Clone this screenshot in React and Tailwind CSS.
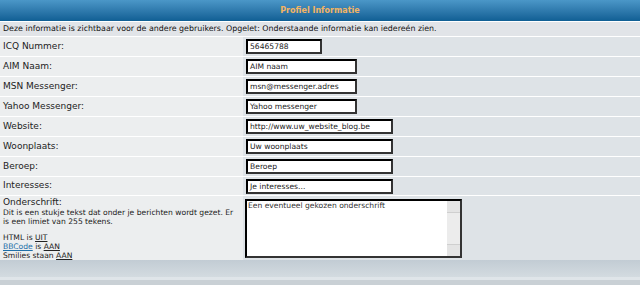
import React from 'react';

const fields = [
  { label: 'ICQ Nummer:', value: '56465788', w: 'w-[76px]' },
  { label: 'AIM Naam:', value: 'AIM naam', w: 'w-[111px]' },
  { label: 'MSN Messenger:', value: 'msn@messenger.adres', w: 'w-[111px]' },
  { label: 'Yahoo Messenger:', value: 'Yahoo messenger', w: 'w-[111px]' },
  { label: 'Website:', value: 'http://www.uw_website_blog.be', w: 'w-[147px]' },
  { label: 'Woonplaats:', value: 'Uw woonplaats', w: 'w-[147px]' },
  { label: 'Beroep:', value: 'Beroep', w: 'w-[147px]' },
  { label: 'Interesses:', value: 'Je interesses...', w: 'w-[147px]', h: 'h-[19px]' },
];

const Input = ({ value, w }) => (
  <div
    className={`${w} h-[15px] bg-white border-2 border-black border-b-[#333] border-r-[#333] px-[2px] text-[7.6px] leading-[11px] text-[#222] whitespace-nowrap overflow-hidden`}
  >
    {value}
  </div>
);

const App = () => {
  return (
    <div className="w-[640px] h-[285px] bg-[#dee3e7] overflow-hidden font-['DejaVu_Sans',Verdana,sans-serif] text-black">
      {/* Header */}
      <div className="h-[22px] bg-gradient-to-b from-[#4b97c8] to-[#0f5f94] border-b border-white flex items-center justify-center">
        <span className="text-[8px] font-bold text-[#f3b463]">Profiel Informatie</span>
      </div>

      {/* Description */}
      <div className="h-[15px] bg-[#e1e4e8] border-b border-white flex items-center px-[3px]">
        <span className="text-[7.9px] text-[#111] whitespace-nowrap">
          Deze informatie is zichtbaar voor de andere gebruikers. Opgelet: Onderstaande informatie kan iedereén zien.
        </span>
      </div>

      {/* Rows */}
      {fields.map((f) => (
        <div key={f.label} className={`flex ${f.h || 'h-[20px]'} border-b border-white`}>
          <div className="w-[243px] bg-[#eceeef] flex items-center px-[3px] text-[9px] text-[#222]">
            {f.label}
          </div>
          <div className="flex-1 bg-[#dee3e7] flex items-center pl-[3px]">
            <Input value={f.value} w={f.w} />
          </div>
        </div>
      ))}

      {/* Onderschrift */}
      <div className="flex h-[64px]">
        <div className="w-[243px] bg-[#eceeef] px-[3px] pt-[1px] text-[#222]">
          <div className="text-[9px] leading-[11px]">Onderschrift:</div>
          <div className="text-[7.6px] leading-[9px] pr-[2px]">
            Dit is een stukje tekst dat onder je berichten wordt gezet. Er is een limiet van 255 tekens.
          </div>
          <div className="text-[7.6px] leading-[9px] mt-[7px]">
            HTML is <span className="underline">UIT</span>
            <br />
            <span className="underline text-[#1e6fa8]">BBCode</span> is <span className="underline">AAN</span>
            <br />
            Smilies staan <span className="underline">AAN</span>
          </div>
        </div>
        <div className="flex-1 bg-[#dee3e7] pl-[2px] pt-[3px]">
          <div className="w-[217px] h-[59px] bg-white border-2 border-black border-b-[#333] border-r-[#333] flex">
            <div className="flex-1 px-[1px] text-[7.6px] leading-[10px] text-[#333]">
              Een eventueel gekozen onderschrift
            </div>
            <div className="w-[13px] bg-[#ececec] flex flex-col justify-between">
              <div className="h-[12px] bg-[#e4e4e4] border-b border-[#cfcfcf]" />
              <div className="h-[12px] bg-[#e4e4e4] border-t border-[#cfcfcf]" />
            </div>
          </div>
        </div>
      </div>

      {/* Footer */}
      <div className="h-[17px] bg-gradient-to-b from-[#c2ccd4] to-[#d3dbe0]" />
      <div className="h-[3px] bg-[#dfe5e9]" />
      <div className="h-[5px] bg-[#c9d0d5]" />
    </div>
  );
};

export default App;
